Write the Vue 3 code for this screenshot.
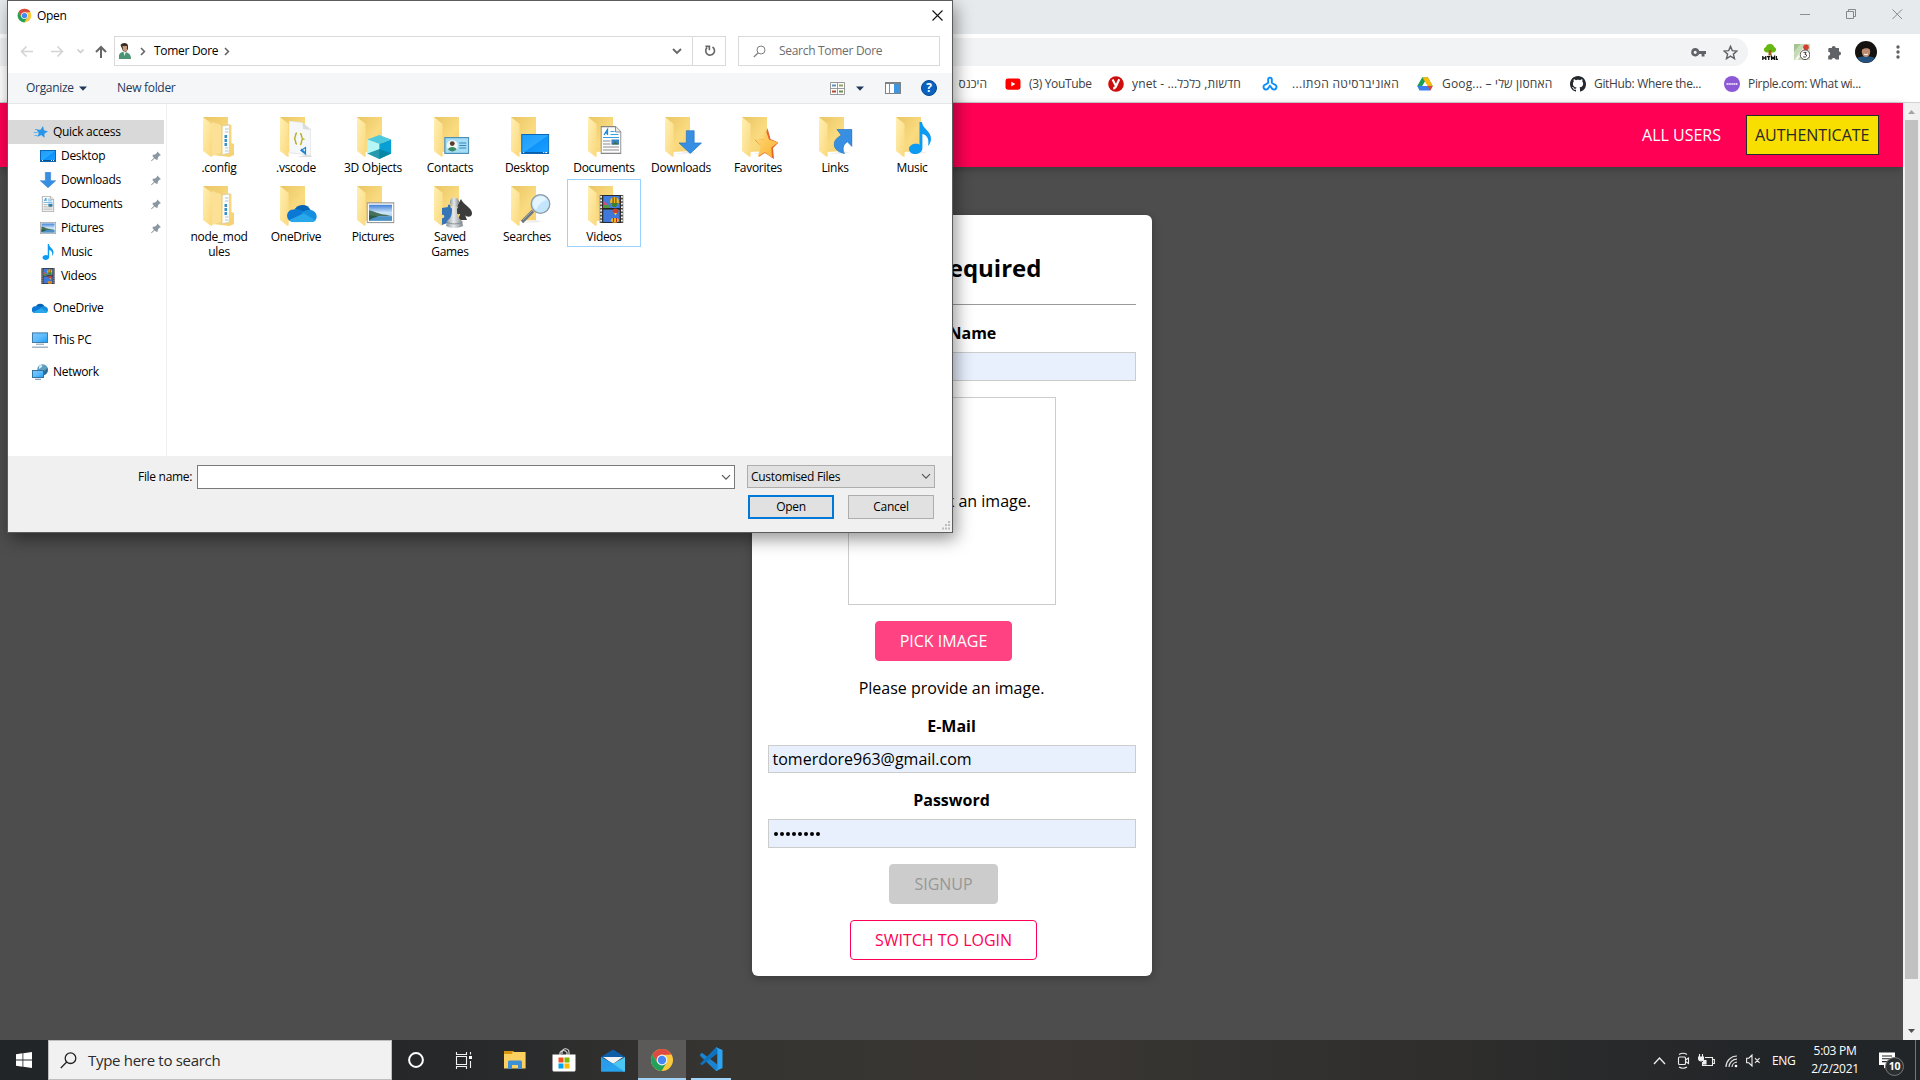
<script setup>
const bookmarks = [
  { icon: '', text: 'היכנס', width: 52, rtl: true, end: true },
  { icon: 'youtube', text: '(3) YouTube', width: 103, gap: 8 },
  { icon: 'ynet', text: 'ynet - חדשות, כלכל...\u200F', width: 154, gap: 8, pull: '.13px' },
  { icon: 'openu', text: 'האוניברסיטה הפתו...', width: 155, gap: 14, rtl: true, pull: '.32px' },
  { icon: 'drive', text: 'Goog... – האחסון שלי', width: 153, gap: 9, pull: '.17px' },
  { icon: 'github', text: 'GitHub: Where the...', width: 154, gap: 8 },
  { icon: 'pirple', text: 'Pirple.com: What wi...', width: 140, gap: 8 },
]

const quick = [
  { icon: 'desktop', text: 'Desktop', pin: true },
  { icon: 'download', text: 'Downloads', pin: true },
  { icon: 'document', text: 'Documents', pin: true },
  { icon: 'picture', text: 'Pictures', pin: true },
  { icon: 'music', text: 'Music' },
  { icon: 'film', text: 'Videos' },
]

const roots = [
  { icon: 'cloud', text: 'OneDrive' },
  { icon: 'pc', text: 'This PC' },
  { icon: 'network', text: 'Network' },
]

const plain = (icon, x, y, w, h) => ({ icon, x, y, w, h })
const files = [
  { text: '.config', art: plain('stack', 8, 4, 31, 40) },
  { text: '.vscode', art: plain('json', 17, 8, 23, 36) },
  { text: '3D Objects', art: plain('cube', 18, 22, 24.5, 24) },
  { text: 'Contacts', art: plain('contact', 18, 24, 25.5, 17) },
  { text: 'Desktop', art: plain('desktop-lg', 18, 21, 28.5, 20) },
  { text: 'Documents', art: plain('document', 20.5, 13, 21, 28) },
  { text: 'Downloads', art: plain('download', 21.5, 17, 23.5, 24) },
  { text: 'Favorites', art: plain('favorite', 20.5, 15, 24, 31) },
  { text: 'Links', art: plain('link', 22.5, 16, 19, 25) },
  { text: 'Music', art: plain('music', 21, 9, 22, 32) },
  { text: 'node_mod ules', art: plain('stack', 8, 4, 31, 40) },
  { text: 'OneDrive', art: plain('cloud', 15, 21, 30, 19.5) },
  { text: 'Pictures', art: plain('picture', 17.5, 20, 28, 21.5) },
  { text: 'Saved Games', art: plain('games', 15, 15, 32, 31) },
  { text: 'Searches', art: plain('lens', 17, 12, 31, 30) },
  { text: 'Videos', art: plain('film', 19.5, 13, 24, 28), focus: true },
]
</script>

<template>
  <div class="screen">
    <svg class="defs" width="0" height="0" aria-hidden="true">
      <defs>
        <linearGradient id="g-back" x1="0" y1="0" x2="1" y2="1"><stop offset="0" stop-color="#e9c564" /><stop offset=".6" stop-color="#fadb80" /><stop offset="1" stop-color="#f5d06e" /></linearGradient>
        <linearGradient id="g-flap" x1="0" y1="0" x2="1" y2="1"><stop offset="0" stop-color="#fff0b4" /><stop offset="1" stop-color="#fbd87c" /></linearGradient>
        <linearGradient id="g-desk" x1="0" y1="0" x2="1" y2="1"><stop offset="0" stop-color="#1c9bfb" /><stop offset=".5" stop-color="#2aa8ff" /><stop offset=".52" stop-color="#0d94fb" /><stop offset="1" stop-color="#1ba0ff" /></linearGradient>
        <linearGradient id="g-sky" x1="0" y1="0" x2="0" y2="1"><stop offset="0" stop-color="#3f7fd8" /><stop offset=".5" stop-color="#cfe6f8" /><stop offset="1" stop-color="#8fbce0" /></linearGradient>
        <linearGradient id="g-blue" x1="0" y1="0" x2="1" y2="1"><stop offset="0" stop-color="#3e8fe0" /><stop offset="1" stop-color="#2f8fe6" /></linearGradient>
        <linearGradient id="g-star" x1="0" y1="0" x2="1" y2="1"><stop offset="0" stop-color="#ffdf86" /><stop offset="1" stop-color="#f9b02a" /></linearGradient>
        <linearGradient id="g-screen" x1="0" y1="0" x2="1" y2="1"><stop offset="0" stop-color="#7cc8ff" /><stop offset=".5" stop-color="#5fbcfc" /><stop offset="1" stop-color="#1a9df5" /></linearGradient>
        <linearGradient id="g-pawn" x1="0" y1="0" x2="1" y2="0"><stop offset="0" stop-color="#8f979c" /><stop offset=".45" stop-color="#e6eaec" /><stop offset="1" stop-color="#7d868b" /></linearGradient>
      </defs>
      <symbol id="chrome" viewBox="0 0 24 24">
        <circle cx="12" cy="12" r="11" fill="#fbc93c" />
        <path d="M2.5 6.5A11 11 0 0 1 21.5 6.5L12 7 7.5 14.5Z" fill="#de4a3f" />
        <path d="M2.5 6.5A11 11 0 0 0 11.6 23L16.6 14.6 12 17 7.4 14.6Z" fill="#22a15a" />
        <circle cx="12" cy="12" r="5.4" fill="#f2f2f2" /><circle cx="12" cy="12" r="4.2" fill="#4688f1" />
      </symbol>
      <symbol id="folder" viewBox="0 0 48 48">
        <path d="M33 38L39 40 18 41Z" fill="#ececec" />
        <path d="M8 4H33V38L16 39Z" fill="url(#g-back)" />
        <path d="M8 4L16.6 11V43.8L15 43.6 8 38Z" fill="url(#g-flap)" />
      </symbol>
      <symbol id="desktop" viewBox="0 0 16 16">
        <rect x=".5" y="2.5" width="15" height="11" fill="url(#g-desk)" stroke="#0a68b8" /><path d="M1 12.5H15" stroke="#0a4f8c" /><path d="M2 12.5h1M11 12.5h1M13 12.5h1" stroke="#fff" />
      </symbol>
      <symbol id="desktop-lg" viewBox="0 0 28 20">
        <rect x=".5" y=".5" width="27" height="19" fill="url(#g-desk)" stroke="#0a68b8" /><path d="M1 18.5H27" stroke="#0a5fa8" /><path d="M2 18.5h1M22 18.5h1M24 18.5h2" stroke="#fff" />
      </symbol>
      <symbol id="download" viewBox="0 0 24 24"><path d="M8 .5H16V13H23.5L12 23.7 .5 13H8Z" fill="url(#g-blue)" stroke="#2475c2" stroke-width=".7" /></symbol>
      <symbol id="document" viewBox="0 0 21 28">
        <path d="M.6.6H15L20.4 6V27.4H.6Z" fill="#fdfdfd" stroke="#858585" stroke-width="1.1" /><path d="M15 .6V6H20.4" fill="#e8e8e8" stroke="#858585" stroke-width=".9" />
        <path d="M3.5 9L7 3.5V9M5 7H7.5" fill="none" stroke="#1b8ad8" stroke-width="1.3" /><path d="M10 5.5H14M10 8.5H18M2.5 11.5H18.5" stroke="#38a0e0" stroke-width="1.2" />
        <path d="M2.5 15H10M2.5 18H10M2.5 21H18.5M2.5 24H18.5" stroke="#8c8c8c" stroke-width="1" /><rect x="11" y="13.5" width="7.5" height="5" fill="#3a80ba" /><path d="M11 18.5L15 16 18.5 18.5Z" fill="#3f6d49" />
      </symbol>
      <symbol id="picture" viewBox="0 0 28 21">
        <rect x=".6" y=".6" width="26.8" height="19.8" fill="#fff" stroke="#979797" stroke-width="1.2" /><rect x="2.5" y="2.5" width="23" height="16" fill="url(#g-sky)" />
        <path d="M2.5 8C8 9 12 12 19 12.5L25.5 14H2.5Z" fill="#46705a" /><path d="M2.5 14H25.5V18.5H2.5Z" fill="#4b91c6" /><path d="M2.5 13L12 14 6 16 2.5 18Z" fill="#2a5a4a" />
      </symbol>
      <symbol id="music" viewBox="0 0 22 32"><path d="M10.5 0H13C13.5 7 22 9 22 16.5 22 20 20.5 22.5 19 24 20.5 17 18 13 13.4 12V26C13.4 30 9.5 32 6.3 32 2.8 32 0 30 0 27 0 23.8 3.4 21.8 7 21.8 8.5 21.8 9.7 22.2 10.5 22.8Z" fill="#0c9af3" /></symbol>
      <symbol id="film" viewBox="0 0 24 28">
        <rect width="24" height="28" fill="#55524f" /><path d="M1.6 1V28M22.4 1V28" stroke="#f3f3f3" stroke-width="1.8" stroke-dasharray="1.8 1.6" /><rect x="3.8" y=".8" width="16.4" height="12.4" fill="#3f7fe2" /><rect x="3.8" y="14.4" width="16.4" height="12.8" fill="#3f78db" />
        <rect x="3.2" y=".4" width="17.6" height="27.2" fill="none" stroke="#222" stroke-width=".9" /><rect x="3.4" y="13" width="17" height="1.5" fill="#222" />
        <path d="M4 6L8 9 11 13H4Z" fill="#d14d7a" /><path d="M4 10H11L9 13H4Z" fill="#4d9a3d" />
        <ellipse cx="15" cy="6.6" rx="4.4" ry="4.6" fill="#f6b818" /><path d="M13.6 2.2V11M16.4 2.2V11" stroke="#3c2a12" stroke-width=".9" /><path d="M11 8H19L16.4 12H13.6Z" fill="#3b8130" /><ellipse cx="16" cy="16" rx="3" ry="2.5" fill="#c8412a" /><path d="M14.5 18L16 20.5 17.5 18Z" fill="#f6c21c" />
        <ellipse cx="15.4" cy="25.3" rx="4" ry="2.4" fill="#f2b21b" /><path d="M14 23V27M17 23V27" stroke="#b42f22" />
      </symbol>
      <symbol id="cloud" viewBox="0 0 30 20">
        <path d="M7 8A9 9 0 0 1 23.8 7.5L12 14Z" fill="#0364b8" /><path d="M5.5 19.5A6.3 6.3 0 0 1 6.8 6.6C10 5.4 13 6.4 16 8.4L20 11 8 19.5Z" fill="#0a78d4" />
        <path d="M14 10L19 7.5C23 5.6 30 7.5 30 13.8 30 17.5 27.5 19.5 24.5 19.5Z" fill="#1490df" /><path d="M2 17.5L16.8 10.6 28.8 17.6C27.6 19 26.2 19.6 24.4 19.6H6.2C4.4 19.6 3 18.8 2 17.5Z" fill="#28a8ea" />
      </symbol>
      <symbol id="pc" viewBox="0 0 16 16"><rect x=".5" y=".9" width="15" height="9.6" fill="url(#g-screen)" stroke="#3f7ca8" /><path d="M4 12.2H12" stroke="#7a95aa" stroke-width="1" /><path d="M0 15.2H16" stroke="#8fa3b4" stroke-width="1.2" /></symbol>
      <symbol id="network" viewBox="0 0 16 16"><circle cx="10.6" cy="5.6" r="5.4" fill="#5e9fc0" /><path d="M7 2C9 0 11 1 10 3L7 5Z" fill="#d6ecf0" /><path d="M12 7L15.6 4C16.6 8 14 11 12 11Z" fill="#2d6c92" /><rect x=".5" y="6.5" width="11" height="7" fill="url(#g-screen)" stroke="#34749f" /><path d="M3 15.3H9" stroke="#7a95aa" stroke-width="1.1" /></symbol>
      <symbol id="stack" viewBox="0 0 31 40">
        <path d="M0 0H25V7L28.5 8V26L31 27V38L26.5 40 9 38Z" fill="url(#g-back)" />
        <path d="M19 9L26.5 8V36L18 38Z" fill="#fbfcfd" stroke="#b8bec4" stroke-width=".5" /><path d="M22 12H25.5M22 15H25.5M22 31H25.5M22 34H25.5" stroke="#9fb6c7" stroke-width=".8" /><path d="M22.8 18V29" stroke="#3a8fc8" stroke-width="2.6" stroke-dasharray="3 1" />
        <path d="M5 3L19.5 6V37L9 38Z" fill="#f3cf74" /><path d="M9 5L18.2 8V36L9 39Z" fill="#fbe096" />
        <path d="M0 0L9 7V40L7.4 39.6 0 34Z" fill="url(#g-flap)" />
      </symbol>
      <symbol id="json" viewBox="0 0 23 36">
        <path d="M21 33L23 36 8 36Z" fill="#ddd" /><path d="M0 0L13 1.5 21.5 8V34.5L0 31.5Z" fill="#f6f7f8" stroke="#dcdfe1" stroke-width=".6" /><path d="M13.5 1.5L14 8 21.5 9Z" fill="#d9dcdf" />
        <path d="M8 12C5.5 12 7.5 17 5 17.5 7.5 18 5.5 23 8 23M11 12.5C13.5 12.5 11.5 17 14 18 11.5 18.5 13.5 23.5 11 23.5" fill="none" stroke="#b9b32c" stroke-width="1.5" /><path d="M16.5 26.5L12 29.5 16.5 33ZM12 28L16 31.5" fill="none" stroke="#1f88d2" stroke-width="1.2" />
      </symbol>
      <symbol id="cube" viewBox="0 0 24 24"><path d="M12 0L24 4.5 12 9 0 4.5Z" fill="#4fc9dc" /><path d="M0 4.5L12 9V24L0 18.5Z" fill="#8ceff2" /><path d="M12 9L24 4.5V18.5L12 24Z" fill="#089fd4" /><path d="M0 18.5L12 14 24 18.5 12 24Z" fill="#067f96" opacity=".75" /><path d="M12 9V14L0 18.5V4.5Z" fill="#c8fbf8" opacity=".7" /></symbol>
      <symbol id="contact" viewBox="0 0 25 17"><rect x=".6" y=".6" width="23.8" height="15.8" fill="#a5dcf6" stroke="#4c8fb8" stroke-width="1.2" /><circle cx="8" cy="8.5" r="5.6" fill="#eef6f2" /><path d="M3.8 12.6C4 9 12 9 12.2 12.6 10 15 6 15 3.8 12.6Z" fill="#3a8a67" /><circle cx="8" cy="6.6" r="2.4" fill="#5a3c2c" /><path d="M15 6H22M15 8.5H22M15 11H22" stroke="#3a88b4" stroke-width="1.1" /></symbol>
      <symbol id="favorite" viewBox="0 0 24 31"><path d="M13 0L16 11 24 14.5 18.5 20 19.5 31 10.5 25 4 29 7 19 0 11.5 9.5 11.5Z" fill="#e4642e" /><path d="M10.8 1L14.5 11.5 23.5 14.5 16.8 19.5 17.5 30 10.4 24.2 3.3 28.5 6.4 18.6 0 10.8 9 11.5Z" fill="url(#g-star)" /></symbol>
      <symbol id="link" viewBox="0 0 19 25"><path d="M3.5.5H18.5V17.5L13.8 12.7C9.5 16 8 20 11 24.5 3 23 0 18 .8 14 1.5 10.5 4 8.5 7.8 6.2Z" fill="url(#g-blue)" stroke="#2476c4" stroke-width=".7" /></symbol>
      <symbol id="games" viewBox="0 0 32 31">
        <path d="M1 11L7 10C6 6 11 7 9.5 11L14 10V27L9 26C9 23 6 23 6.5 26L1 28V21C4 22 4 17 1 18Z" fill="#3674b8" /><path d="M20 2C22 8 32 11 31 17 30 21 25 20 24 18L26 23H17L19 17C14 18 13 14 15 11Z" fill="#3c3c3c" />
        <circle cx="13.5" cy="5" r="4.6" fill="url(#g-pawn)" /><path d="M9.5 9.5H17.5L16 12C16 18 17 21 21 24L22 29C18 31.5 9 31.5 5 29L6 24C10 21 11 18 11 12Z" fill="url(#g-pawn)" /><path d="M5.5 25C10 27.5 17 27.5 21.5 25" stroke="#7a8287" fill="none" stroke-width=".8" />
      </symbol>
      <symbol id="lens" viewBox="0 0 31 30"><path d="M2 28L13 17" stroke="#6d7780" stroke-width="3.2" /><path d="M3 26L12 17" stroke="#96a0a8" stroke-width="1" /><circle cx="20.5" cy="10" r="9.3" fill="#c3e6fc" stroke="#8d9aa6" stroke-width="1.3" /><path d="M13 10A7.5 7.5 0 0 1 27 6C22 7 18 11 16 16A8 8 0 0 1 13 10Z" fill="#e5f5ff" /></symbol>
      <symbol id="user" viewBox="0 0 12 16"><path d="M1.5 2C3-.8 9-.8 9 3V6L7 9 4 8Z" fill="#3a2b25" /><path d="M3.5 3H8V7.5L6 9 4 7Z" fill="#c49a7e" /><path d="M0 16V12C1 9.5 3 9 5 9 9 9 12 11 12 16Z" fill="#4b9574" /><path d="M4.5 9L5.5 13 7 9Z" fill="#e9f2ee" /></symbol>
      <symbol id="pin" viewBox="0 0 11 11"><path d="M7 0L11 4 9.6 4.4 7.6 6.5 7.3 9 5.7 9.2 4 7.6 .6 10.8 0 10.2 3.3 7 1.7 5.2 2 3.7 4.6 3.4 6.6 1.4Z" fill="#8a97a1" /></symbol>
      <symbol id="youtube" viewBox="0 0 16 16"><rect x=".5" y="2.5" width="15" height="11.2" rx="2.4" fill="#f00" /><path d="M6.3 5.8L10.4 8.1 6.3 10.4Z" fill="#fff" /></symbol>
      <symbol id="ynet" viewBox="0 0 16 16"><circle cx="8" cy="8" r="7.8" fill="#ce0e0e" /><path d="M4.6 3.6L7.8 9.8M11.2 3.2L8.3 9.7Q7.4 12.4 5.2 12.4" fill="none" stroke="#fff" stroke-width="2.1" /></symbol>
      <symbol id="openu" viewBox="0 0 16 16"><path d="M6.2 6.8V3.4A1.8 1.8 0 0 1 9.8 3.4V6.8L12.8 8.7A2.5 2.5 0 1 1 10.4 13L8 9.8 5.6 13A2.5 2.5 0 1 1 3.2 8.7Z" fill="none" stroke="#0a8dfb" stroke-width="1.9" /></symbol>
      <symbol id="drive" viewBox="0 0 16 16"><path d="M5.2 1.2H10.8L15.6 9.8H10.6L8 5.6 5 10.5 2.7 14.4 .3 10Z" fill="#18a05a" /><path d="M5.3 1.2H10.8L15.7 9.8H10.4Z" fill="#fdba08" /><path d="M.3 10H15.7L13.2 14.6H2.8Z" fill="#3c7df0" /><path d="M10.5 10H15.7L13.2 14.6Z" fill="#e64234" /><path d="M8 5.7L10.5 10H5.4Z" fill="#fff" /></symbol>
      <symbol id="github" viewBox="0 0 16 16"><path fill="#24292e" d="M8 0C3.58 0 0 3.58 0 8c0 3.54 2.29 6.53 5.47 7.59.4.07.55-.17.55-.38 0-.19-.01-.82-.01-1.49-2.01.37-2.53-.49-2.69-.94-.09-.23-.48-.94-.82-1.13-.28-.15-.68-.52-.01-.53.63-.01 1.08.58 1.23.82.72 1.21 1.87.87 2.33.66.07-.52.28-.87.51-1.07-1.78-.2-3.64-.89-3.64-3.95 0-.87.31-1.59.82-2.15-.08-.2-.36-1.02.08-2.12 0 0 .67-.21 2.2.82.64-.18 1.32-.27 2-.27s1.36.09 2 .27c1.53-1.04 2.2-.82 2.2-.82.44 1.1.16 1.92.08 2.12.51.56.82 1.27.82 2.15 0 3.07-1.87 3.75-3.65 3.95.29.25.54.73.54 1.48 0 1.07-.01 1.93-.01 2.2 0 .21.15.46.55.38A8.01 8.01 0 0 0 16 8c0-4.42-3.58-8-8-8z" /></symbol>
      <symbol id="pirple" viewBox="0 0 16 16"><circle cx="8" cy="8" r="8" fill="#8c58d6" /><path d="M2.5 8H13.5" stroke="#e6dcf7" stroke-width="2" stroke-dasharray="1.4 .5" /></symbol>
    </svg>

    <section class="browser">
      <div class="tabstrip">
        <svg width="11" height="10"><path d="M0 5.5H10" stroke="#8b8d90" /></svg>
        <svg width="11" height="11"><path d="M.5 2.5H7.5V9.5H.5ZM2.5 2V.5H9.5V7.5H8" fill="none" stroke="#85878a" /></svg>
        <svg width="11" height="11"><path d="M.5.5L10 10M10 .5L.5 10" stroke="#85878a" /></svg>
      </div>
      <div class="toolbar">
        <div class="omnibox">
          <svg width="15" height="9" viewBox="0 0 15 9"><path d="M4.2 0A4.2 4.2 0 0 1 8.2 3H15V6H13.5V8.6H10.6V6H8.2A4.2 4.2 0 1 1 4.2 0ZM4.2 2.8A1.5 1.5 0 1 0 4.2 5.9 1.5 1.5 0 0 0 4.2 2.8Z" fill="#5f6368" /></svg>
          <svg width="15" height="15" viewBox="0 0 15 15"><path d="M7.5 1.3L9.3 5.6 14 6 10.4 9.1 11.5 13.7 7.5 11.2 3.5 13.7 4.6 9.1 1 6 5.7 5.6Z" fill="none" stroke="#5f6368" stroke-width="1.4" /></svg>
        </div>
        <svg class="ext tree" width="16" height="16" viewBox="0 0 16 16"><path d="M8 0C11 0 12 2 12 3 15 4 15 8 11 8.5H5C1 8 1 4 4 3 4 1 6 0 8 0Z" fill="#65b80f" /><path d="M6.8 6H9.2L9.6 11.5H6.4Z" fill="#9b5f1e" /><path d="M.8 12V16M3.8 12V16M.8 14H3.8M5 12.6H8.4M6.7 12.6V16M9.6 16V12.6L11.1 14.6 12.5 12.6V16M14.4 12V15.3H16" fill="none" stroke="#111" stroke-width="1.3" /></svg>
        <svg class="ext maps" width="16" height="16" viewBox="0 0 16 16"><rect width="16" height="16" fill="#c5dab5" /><path d="M0 6L6 0M2 16L12 2" stroke="#f7f7ef" stroke-width="2.4" /><path d="M0 0H7L0 8Z" fill="#a4c591" /><circle cx="12" cy="3.3" r="2.8" fill="#d63c30" /><circle cx="11" cy="10.8" r="4.8" fill="#fff" stroke="#555" stroke-width="1" /><path d="M9.4 8.4H12.2L10.9 10.3Q13 10.4 12.6 12 11.6 13.8 9.2 12.8" fill="none" stroke="#333" stroke-width=".9" /></svg>
        <svg class="ext puzzle" width="15" height="15" viewBox="0 0 15 15"><path d="M1.5 3H4.7A2 2 0 1 1 8.7 3H12V6.4A2 2 0 1 1 12 10.4V14.5H8.6A2 2 0 0 0 4.8 14.5H1.2V10.8A2 2 0 0 0 1.2 6.8Z" fill="#5f6368" /></svg>
        <svg class="avatar" width="22" height="22" viewBox="0 0 22 22"><circle cx="11" cy="11" r="11" fill="#15120f" /><path d="M2 17C6 14.5 16 14.5 20 17A11 11 0 0 1 2 17Z" fill="#24527f" /><ellipse cx="11" cy="10.6" rx="4.2" ry="5.4" fill="#bd8c70" /><path d="M6.5 9C6 3 16 3 15.5 9 14 6.5 9 6.5 6.5 9Z" fill="#17110e" /><path d="M9 13Q11 14.6 13 13" stroke="#fff" fill="none" /></svg>
        <svg class="dots" width="4" height="14" viewBox="0 0 4 14"><circle cx="2" cy="2" r="1.7" fill="#5f6368" /><circle cx="2" cy="7" r="1.7" fill="#5f6368" /><circle cx="2" cy="12" r="1.7" fill="#5f6368" /></svg>
      </div>
      <div class="bookmarks">
        <div v-for="b in bookmarks" :key="b.text" class="bookmark" :class="{ end: b.end }" :style="{ width: b.width + 'px', gap: (b.gap || 0) + 'px', letterSpacing: b.pull }">
          <svg v-if="b.icon" width="16" height="16"><use :href="'#' + b.icon" /></svg>
          <span :dir="b.rtl ? 'rtl' : 'ltr'">{{ b.text }}</span>
        </div>
      </div>
      <div class="viewport">
        <div class="page">
          <header class="header">
            <a class="link">ALL USERS</a>
            <a class="link auth">AUTHENTICATE</a>
          </header>
          <main class="main">
            <form class="card" @submit.prevent>
              <h2>Login Required</h2>
              <hr />
              <label class="label">Your Name</label>
              <div class="input tall"></div>
              <div class="preview">Please pick an image.</div>
              <button type="button" class="btn pick">PICK IMAGE</button>
              <p class="hint">Please provide an image.</p>
              <label class="label snug">E-Mail</label>
              <div class="input">tomerdore963@gmail.com</div>
              <label class="label snug">Password</label>
              <div class="input tall password"><i v-for="n in 8" :key="n"></i></div>
              <button type="button" class="btn signup">SIGNUP</button>
              <button type="button" class="btn switch">SWITCH TO LOGIN</button>
            </form>
          </main>
        </div>
        <div class="scrollbar">
          <svg width="17" height="17"><path d="M5 11L8.5 7 12 11Z" fill="#a3a3a3" /></svg>
          <div class="thumb"></div>
          <svg width="17" height="17"><path d="M5 6L8.5 10 12 6Z" fill="#505050" /></svg>
        </div>
      </div>
    </section>

    <section class="dialog">
      <div class="title">
        <svg width="15" height="15"><use href="#chrome" /></svg>
        <span>Open</span>
        <svg class="close" width="11" height="11"><path d="M.5.5L10.5 10.5M10.5.5L.5 10.5" stroke="#111" stroke-width="1.1" /></svg>
      </div>
      <div class="nav">
        <svg class="arrows" width="106" height="30" viewBox="0 0 106 30" fill="none">
          <path d="M25 15.5H14M18.5 10.5L13.5 15.5 18.5 20.5M43 15.5H54M49.5 10.5L54.5 15.5 49.5 20.5" stroke="#d4d4d4" stroke-width="1.6" />
          <path d="M69.5 13.5L72.5 16.5 75.5 13.5" stroke="#c9c9c9" stroke-width="1.5" />
          <path d="M93 22V11.5M88 16L93 11 98 16" stroke="#666" stroke-width="2" />
        </svg>
        <div class="address">
          <svg width="12" height="16"><use href="#user" /></svg>
          <svg class="c1" width="6" height="9"><path d="M1 1L4.4 4.5 1 8" fill="none" stroke="#666" stroke-width="1.6" /></svg>
          <span>Tomer Dore</span>
          <svg class="c2" width="6" height="9"><path d="M1 1L4.4 4.5 1 8" fill="none" stroke="#666" stroke-width="1.6" /></svg>
          <svg class="drop" width="10" height="7"><path d="M1 1L5 5 9 1" fill="none" stroke="#666" stroke-width="1.8" /></svg>
          <div class="refresh"><svg width="12" height="12" viewBox="0 0 12 12"><path d="M8.5 2A4.4 4.4 0 1 1 3 2.6M1.4 1.4H5.4V5.2" fill="none" stroke="#666" stroke-width="1.6" /></svg></div>
        </div>
        <div class="find">
          <svg width="13" height="13"><circle cx="8" cy="5" r="4" fill="none" stroke="#808080" /><path d="M5 8L.8 12" stroke="#808080" stroke-width="1.3" /></svg>
          <span>Search Tomer Dore</span>
        </div>
      </div>
      <div class="commands">
        <span class="organize">Organize</span>
        <svg width="8" height="5"><path d="M0 .5H8L4 4.7Z" fill="#1e395b" /></svg>
        <span class="new">New folder</span>
        <svg class="views" width="15" height="13"><path d="M.5.5H14.5V12.5H.5ZM7.5 0V13M0 6.5H15" fill="#fff" stroke="#999" /><path d="M2 3.5H6" stroke="#5b93bb" stroke-width="2" /><path d="M9 3.5H13" stroke="#8da55d" stroke-width="2" /><path d="M2 9.5H6" stroke="#b5482f" stroke-width="2" /><path d="M9 9.5H13" stroke="#6f8d52" stroke-width="2" /></svg>
        <svg class="tri" width="8" height="5"><path d="M0 .5H8L4 4.7Z" fill="#1e395b" /></svg>
        <svg class="pane" width="16" height="12"><rect x=".5" y=".5" width="15" height="11" fill="#fff" stroke="#7d8286" /><path d="M0 1H16" stroke="#7d8286" stroke-width="2" /><path d="M4.5 2V12" stroke="#8a8a8a" /><rect x="9" y="2" width="6" height="9" fill="#3f95de" /></svg>
        <div class="help">?</div>
      </div>
      <div class="body">
        <nav class="tree-pane">
          <div class="row root selected"><svg width="16" height="14" viewBox="-1 0 16 14"><path d="M10 1L11 5.2 15 6.4 11.5 8.6 11.4 12.8 8.2 10 4.4 12 5.8 8 3.5 4.8 7.6 4.8Z" fill="#2795ea" /><path d="M2 4.5H5M.8 7.5H4.5M1.5 10.5H4.5" stroke="#56b4f5" stroke-width="1.2" /></svg><span>Quick access</span></div>
          <div v-for="q in quick" :key="q.text" class="row sub">
            <svg width="16" height="16"><use :href="'#' + q.icon" /></svg><span>{{ q.text }}</span>
            <svg v-if="q.pin" class="pin" width="10" height="11"><use href="#pin" /></svg>
          </div>
          <div v-for="r in roots" :key="r.text" class="row root spaced"><svg width="16" height="16"><use :href="'#' + r.icon" /></svg><span>{{ r.text }}</span></div>
        </nav>
        <div class="files">
          <div v-for="f in files" :key="f.text" class="file" :class="{ focus: f.focus }">
            <svg width="48" height="48" viewBox="0 0 48 48">
              <use v-if="f.art.icon !== 'stack'" href="#folder" width="48" height="48" />
              <use :href="'#' + f.art.icon" :x="f.art.x" :y="f.art.y" :width="f.art.w" :height="f.art.h" />
            </svg>
            <span>{{ f.text }}</span>
          </div>
        </div>
      </div>
      <div class="footer">
        <div class="line">
          <span class="fname">File name:</span>
          <div class="combo"><svg width="10" height="7"><path d="M1 1.2L5 5.2 9 1.2" fill="none" stroke="#555" stroke-width="1.2" /></svg></div>
          <div class="filter"><span>Customised Files</span><svg width="10" height="7"><path d="M1 1.2L5 5.2 9 1.2" fill="none" stroke="#555" stroke-width="1.2" /></svg></div>
        </div>
        <div class="line actions">
          <button type="button" class="wbtn primary">Open</button>
          <button type="button" class="wbtn">Cancel</button>
        </div>
        <svg class="grip" width="9" height="9"><path d="M7 1H9M4 4H6M7 4H9M1 7.5H3M4 7.5H6M7 7.5H9" stroke="#bcbcbc" stroke-width="2" /></svg>
      </div>
    </section>

    <footer class="taskbar">
      <div class="start"><svg width="16" height="16" viewBox="0 0 16 16"><path d="M0 2.2L6.5 1.3V7.5H0ZM7.3 1.2L16 0V7.5H7.3ZM0 8.4H6.5V14.7L0 13.8ZM7.3 8.4H16V16L7.3 14.8Z" fill="#fff" /></svg></div>
      <div class="search">
        <svg width="17" height="17"><circle cx="10.5" cy="6.2" r="5.3" fill="none" stroke="#222" stroke-width="1.3" /><path d="M6.7 10L.8 16" stroke="#222" stroke-width="1.3" /></svg>
        <span>Type here to search</span>
      </div>
      <div class="task"><svg width="18" height="18"><circle cx="9" cy="9" r="6.9" fill="none" stroke="#fff" stroke-width="2" /></svg></div>
      <div class="task view"><svg width="18" height="17" viewBox="0 0 18 17"><path d="M1.5 4.5H11.5V12.5H1.5ZM1.5 0V2.5H11.5V0M1.5 17V14.5H11.5V17M15.5 0V2.5M15.5 9V16" fill="none" stroke="#f2f2f2" stroke-width="1.1" /><rect x="14" y="4" width="3" height="3" fill="#fff" /></svg></div>
      <div class="task pinned"><svg width="22" height="18" viewBox="0 0 22 18"><path d="M0 0H9L10 1H21.6V17.4H0Z" fill="#fbd060" /><path d="M0 0H9L8 3H0Z" fill="#d79612" /><path d="M4 18V10.5L5 9.5H17L18 10.5V18H14V14H8V18Z" fill="#3d8fd6" /></svg></div>
      <div class="task pinned"><svg width="24" height="24" viewBox="0 0 24 24"><path d="M8 7V4.5A4 4 0 0 1 15 4.5V7M10 6V4A3 3 0 0 1 17 4.5V7" fill="none" stroke="#ddd" stroke-width="1.1" /><path d="M.5 6.5H23.5V22Q23.5 23.5 22 23.5H2Q.5 23.5 .5 22Z" fill="#fff" /><rect x="6.5" y="9.5" width="5" height="5" fill="#f25022" /><rect x="12.5" y="9.5" width="5" height="5" fill="#7fba00" /><rect x="6.5" y="15.5" width="5" height="5" fill="#00a4ef" /><rect x="12.5" y="15.5" width="5" height="5" fill="#ffb900" /></svg></div>
      <div class="task pinned"><svg width="24" height="23" viewBox="0 0 24 23"><path d="M0 8L12 .5 24 8V9H0Z" fill="#0f5ea8" /><path d="M2 8H22L12 15Z" fill="#f2f2f2" /><path d="M0 8L13 15 24 22.5H0Z" fill="#2b9ceb" /><path d="M24 8L12 14.8 22 22.5H24Z" fill="#4cc6f3" /><path d="M0 22.5L12 15 24 22.5Z" fill="#27a6ee" opacity=".8" /></svg></div>
      <div class="task active"><svg width="24" height="24"><use href="#chrome" /></svg></div>
      <div class="task running"><svg width="24" height="24" viewBox="0 0 24 24"><path d="M1.2 7.2L3 5.8 18.4 17.6V23.9H17L1.2 9Z" fill="#1b83cf" /><path d="M1.2 16.8L17 .2 18.4 .2V6.6L3 18.3 1.2 17Z" fill="#0d73bf" /><path d="M17 .2L23.5 3V21L17 23.9 18.3 21.5V2.5Z" fill="#2da4f1" /></svg></div>
      <div class="tray">
        <svg class="up" width="13" height="9"><path d="M1 8L6.5 2 12 8" fill="none" stroke="#eee" stroke-width="1.3" /></svg>
        <svg class="meet" width="13" height="17" viewBox="0 0 13 17" fill="none" stroke="#eee" stroke-width="1.1"><rect x="1.5" y="5" width="7" height="7.5" rx="1" /><path d="M8.5 8L11.5 6V11.5L8.5 9.5M2 2.5Q6 0 10 2.5M2 15Q6 17.5 10 15" /></svg>
        <svg class="battery" width="17" height="13" viewBox="0 0 17 13" fill="none" stroke="#eee" stroke-width="1.1"><path d="M7 3.5H14.5V11.5H4.5V8M15 5.5H16.4V9.5H15M1.5 0V3M4.5 0V3" /><path d="M.5 3H5.5V5Q5 7 3 7 1 7 .5 5Z" fill="#eee" /><rect x="5.5" y="6.5" width="2.5" height="3.5" fill="#eee" /></svg>
        <svg class="wifi" width="13" height="13" viewBox="0 0 13 13" fill="none" stroke="#ddd" stroke-width="1.2"><path d="M1 12A11 11 0 0 1 12 1M4 12A8 8 0 0 1 12 4.2M7 12A5 5 0 0 1 12 7.2" /><circle cx="11" cy="11" r="1.3" fill="#fff" stroke="none" /></svg>
        <svg class="sound" width="15" height="13" viewBox="0 0 15 13" fill="none" stroke="#eee" stroke-width="1.1"><path d="M.6 4.2H2.8L6 1V12L2.8 8.8H.6ZM9 4.2L13.6 8.8M13.6 4.2L9 8.8" /></svg>
        <span class="lang">ENG</span>
        <div class="clock"><span>5:03 PM</span><span>2/2/2021</span></div>
        <div class="notes">
          <svg width="16" height="17" viewBox="0 0 16 17"><path d="M0 .5H16V13H9L5 16.5V13H0Z" fill="#fff" /><path d="M3 4H13M3 6.8H13M3 9.6H9" stroke="#222" stroke-width="1.1" /></svg>
          <b>10</b>
        </div>
        <div class="peek"></div>
      </div>
    </footer>
  </div>
</template>

<style>
body { margin: 0; overflow: hidden; }
</style>

<style scoped>
* { box-sizing: border-box; }
svg { display: block; flex: none; }
.defs { position: absolute; }
.screen { position: relative; width: 1920px; height: 1080px; overflow: hidden; display: flex; flex-direction: column; font-family: "Open Sans", "Noto Sans", "DejaVu Sans", sans-serif; font-size: 16px; }

.browser { flex: 1; min-height: 0; display: flex; flex-direction: column; background: #fff; }
.tabstrip { height: 34px; background: #e6eaed; display: flex; justify-content: flex-end; gap: 35px; padding: 9px 17px 0 0; }
.toolbar { height: 36px; display: flex; align-items: center; }
.omnibox { width: 1748px; height: 28px; background: #f1f3f4; border-radius: 0 14px 14px 0; display: flex; align-items: center; justify-content: flex-end; gap: 17px; padding-right: 10px; }
.tree { margin-left: 14px; }
.maps { margin-left: 16px; }
.puzzle { margin-left: 17px; }
.avatar { margin-left: 13px; }
.dots { margin-left: 19px; }
.bookmarks { height: 33px; border-bottom: 1px solid #d0d3d6; display: flex; align-items: center; padding: 0 0 5px 953px; font-size: 12px; letter-spacing: -.33px; color: #3c4043; white-space: nowrap; }
.bookmark { display: flex; align-items: center; flex: none; }
.bookmark.end { justify-content: flex-end; padding-right: 18px; letter-spacing: 0; }

.viewport { flex: 1; min-height: 0; display: flex; }
.page { flex: 1; background: #4d4d4d; display: flex; flex-direction: column; }
.header { height: 64px; background: #ff0055; display: flex; align-items: center; justify-content: flex-end; gap: 25px; padding-right: 24px; box-shadow: 0 2px 8px rgba(0,0,0,.26); }
.link { color: #fff; line-height: 22px; }
.auth { height: 40px; padding: 8px; width: 133px; white-space: nowrap; border: 1px solid #292929; background: #f8df00; color: #292929; }
.main { display: flex; justify-content: center; padding-top: 48px; }
.card { width: 400px; height: 761px; border-radius: 6px; background: #fff; box-shadow: 0 2px 8px rgba(0,0,0,.26); padding: 16px; display: flex; flex-direction: column; align-items: center; }
h2 { margin: 20px 0 0; font-size: 24px; line-height: 33px; font-weight: 700; }
hr { width: 368px; margin: 20px 0 0; height: 1px; border: 0; background: #999; flex: none; }
.label { font-weight: 700; line-height: 22px; margin: 17px 0 8px; }
.snug { margin-top: 16px; }
.input { width: 368px; height: 28px; border: 1px solid #ccc; background: #e8f0fe; padding: 0 4px; line-height: 26px; flex: none; }
.tall { height: 29px; }
.preview { width: 208px; height: 208px; margin-top: 16px; border: 1px solid #ccc; display: flex; align-items: center; justify-content: center; flex: none; }
.btn { height: 40px; margin: 16px 16px 0 0; padding: 0; border: 1px solid; border-radius: 4px; font: inherit; flex: none; }
.pick { width: 137px; background: #ff4382; border-color: #ff4382; color: #fff; }
.hint { margin: 16px 0 0; line-height: 22px; }
.password { display: flex; align-items: center; gap: 2px; padding-left: 5px; }
.password i { width: 4px; height: 4px; border-radius: 50%; background: #000; }
.signup { width: 109px; background: #ccc; border-color: #ccc; color: #979797; }
.switch { width: 187px; background: #fff; border-color: #ff0055; color: #ff0055; }
.scrollbar { width: 17px; background: #f1f1f1; display: flex; flex-direction: column; }
.thumb { width: 13px; height: 859px; margin-left: 2px; background: #c1c1c1; }
.scrollbar svg:last-child { margin-top: auto; }

.dialog { position: absolute; left: 7px; top: 0; width: 946px; height: 533px; background: #fff; border: 1px solid #5c5c5c; box-shadow: 3px 6px 16px rgba(0,0,0,.42); display: flex; flex-direction: column; font-size: 12px; letter-spacing: -.3px; color: #000; }
.title { height: 30px; display: flex; align-items: center; gap: 5px; padding: 0 9px 2px 9px; }
.close { margin: 0 0 0 auto; }
.nav { height: 42px; padding-top: 5px; display: flex; }
.address { width: 612px; height: 30px; border: 1px solid #d9d9d9; display: flex; align-items: center; padding-left: 4px; }
.address span, .find span { padding-bottom: 1px; }
.c1 { margin: 0 8px 0 9px; }
.c2 { margin-left: 6px; }
.drop { margin-left: auto; }
.refresh { width: 33px; height: 100%; margin-left: 10px; border-left: 1px solid #d9d9d9; display: flex; align-items: center; justify-content: center; padding-left: 2px; }
.find { width: 202px; height: 30px; margin-left: 12px; border: 1px solid #d9d9d9; display: flex; align-items: center; gap: 13px; padding-left: 14px; color: #6d6d6d; }
.commands { height: 31px; background: #f5f6f7; border-bottom: 1px solid #e5e6e8; display: flex; align-items: center; padding-left: 18px; color: #1e395b; }
.commands span { padding-bottom: 1px; }
.organize { width: 53px; }
.new { margin-left: 30px; }
.views { margin-left: auto; }
.tri { margin-left: 11px; }
.pane { margin-left: 21px; }
.help { width: 16px; height: 16px; margin: 0 15px 0 20px; border-radius: 50%; background: #0a63c0; border: 1px solid #07498f; color: #fff; font-weight: 700; font-size: 12px; line-height: 14px; text-align: center; letter-spacing: 0; }
.body { height: 352px; display: flex; }
.tree-pane { width: 159px; border-right: 1px solid #f0f0f0; padding-top: 16px; }
.row { height: 24px; width: 156px; display: flex; align-items: center; gap: 5px; }
.row span { padding-bottom: 2px; }
.root { padding-left: 24px; }
.sub { padding-left: 32px; }
.spaced { margin-top: 8px; }
.selected { background: #d9d9d9; }
.pin { margin: 0 3px 0 auto; }
.files { flex: 1; display: grid; grid-template-columns: repeat(10, 77px); grid-auto-rows: 69px; padding: 6px 0 0 15px; overflow: hidden; }
.file { width: 74px; height: 68px; border: 1px solid transparent; padding-top: 2px; display: flex; flex-direction: column; align-items: center; text-align: center; line-height: 15px; }
.file span { width: 62px; margin-top: -1px; }
.focus { border-color: #99d1ff; }
.footer { position: relative; flex: 1; background: #f0f0f0; padding-top: 9px; }
.line { display: flex; }
.fname { width: 59px; margin-left: 130px; line-height: 24px; }
.combo { width: 538px; height: 24px; background: #fff; border: 1px solid #7a7a7a; display: flex; align-items: center; justify-content: flex-end; padding-right: 3px; }
.filter { width: 188px; height: 23px; margin-left: 12px; background: #e1e1e1; border: 1px solid #adadad; display: flex; align-items: center; justify-content: space-between; padding: 0 3px; }
.actions { gap: 14px; margin: 6px 0 0 740px; }
.wbtn { width: 86px; height: 24px; padding: 0 0 2px; background: #e1e1e1; border: 1px solid #adadad; font: inherit; letter-spacing: inherit; color: #000; }
.primary { border: 2px solid #0078d7; }
.grip { position: absolute; right: 2px; bottom: 2px; }

.taskbar { height: 40px; display: flex; background: linear-gradient(90deg, #222528 0, #26282a 24%, #363431 37%, #393633 55%, #2f2e2d 75%, #222528 92%); color: #fff; }
.start { width: 48px; display: flex; align-items: center; justify-content: center; }
.search { width: 344px; background: #f1f1f1; border: 1px solid #bdbdbd; display: flex; align-items: center; gap: 11px; padding-left: 11px; font-size: 15px; letter-spacing: -.3px; color: #2b2b2b; }
.task { width: 48px; height: 40px; margin-right: 1px; display: flex; align-items: center; justify-content: center; }
.view { padding-right: 2px; }
.pinned { padding-left: 2px; }
.active { background: #5b5a58; border-bottom: 2px solid #a3d4f7; margin-left: 1px; }
.active svg { margin-top: 2px; }
.running { width: 40px; margin-left: 4px; border-bottom: 2px solid #a3d4f7; }
.tray { margin-left: auto; display: flex; align-items: center; font-size: 12px; letter-spacing: -.3px; }
.meet { margin-left: 11px; }
.battery { margin-left: 8px; }
.wifi { margin: 2px 0 0 10px; }
.sound { margin-left: 8px; }
.lang { margin-left: 11px; width: 24px; }
.clock { width: 50px; margin: 0 0 1px 14px; display: flex; flex-direction: column; align-items: center; line-height: 17.5px; }
.notes { position: relative; margin-left: 19px; width: 16px; height: 17px; }
.notes b { position: absolute; left: 6px; top: 5px; width: 19px; height: 19px; border: 1px solid #777; border-radius: 50%; background: #2c2f31; font-size: 10.5px; line-height: 16px; text-align: center; }
.peek { width: 5px; height: 40px; margin-left: 20px; border-left: 1px solid #777; }
</style>
